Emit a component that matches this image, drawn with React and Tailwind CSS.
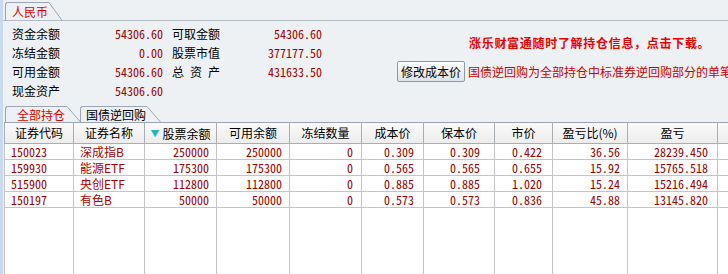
import React from 'react';

const CJK = "[font-family:'Noto_Sans_CJK_SC',sans-serif]";
const NUM = "[font-family:'Noto_Sans_Mono_CJK_SC','Liberation_Mono',monospace]";

// タブ（右側が斜めの形）
const Tab = ({ label, active, h = 19, pl = 'pl-[6px]', pr = 'pr-[1px]' }) => (
  <div className="flex items-end" style={{ height: h }}>
    <div
      className={`h-full flex items-center border-t border-l border-[#9aa6b2] rounded-tl-[3px] ${pl} ${pr} text-[12px] leading-none ${CJK} ${
        active ? 'text-[#e00000]' : 'text-black'
      }`}
    >
      {label}
    </div>
    <svg width="14" height={h} className="block">
      <path d={`M0 0.5 L13.5 ${h}`} stroke="#9aa6b2" fill="none" />
    </svg>
  </div>
);

const info = [
  ['资金余额', '54306.60', '可取金额', '54306.60'],
  ['冻结金额', '0.00', '股票市值', '377177.50'],
  ['可用金额', '54306.60', '总资产', '431633.50'],
  ['现金资产', '54306.60', '', ''],
];

const cols = [69, 71, 72, 73, 72, 62, 71, 58, 75, 90, 11];
const heads = ['证券代码', '证券名称', '股票余额', '可用余额', '冻结数量', '成本价', '保本价', '市价', '盈亏比(%)', '盈亏', ''];
const pads = ['', '', 'pr-[7px]', 'pr-[7px]', 'pr-[8px]', 'pr-[9px]', 'pr-[14px]', 'pr-[10px]', 'pr-[7px]', 'pr-[9px]', ''];

const rows = [
  ['150023', '深成指B', '250000', '250000', '0', '0.309', '0.309', '0.422', '36.56', '28239.450'],
  ['159930', '能源ETF', '175300', '175300', '0', '0.565', '0.565', '0.655', '15.92', '15765.518'],
  ['515900', '央创ETF', '112800', '112800', '0', '0.885', '0.885', '1.020', '15.24', '15216.494'],
  ['150197', '有色B', '50000', '50000', '0', '0.573', '0.573', '0.836', '45.88', '13145.820'],
];

export default function App() {
  return (
    <div className="w-[728px] h-[274px] overflow-hidden flex bg-[#edf1f4]">
      {/* 左の青いライン */}
      <div className="w-[3px] shrink-0 bg-[#c7daf1]" />

      <div className="flex-1 min-w-0 flex flex-col">
        {/* 通貨タブ */}
        <div className="h-[21px] pt-[2px] pl-[2px] border-b border-[#b3bcc5]">
          <Tab label="人民币" active />
        </div>

        {/* 資金情報 */}
        <div className="flex">
          <div className="grid grid-cols-[48px_103px_57px_102px] auto-rows-[19px] items-center mt-[3px] ml-[9px] text-[12px] leading-none">
            {info.map((r, i) => (
              <React.Fragment key={i}>
                <div className={`${CJK} text-black`}>{r[0]}</div>
                <div className={`${NUM} text-right text-[#a00000]`}>{r[1]}</div>
                <div className={`${CJK} text-black pl-[9px]`}>
                  {r[2] === '总资产' ? (
                    <span className="flex justify-between w-[48px]">
                      <span>总</span><span>资</span><span>产</span>
                    </span>
                  ) : (
                    r[2]
                  )}
                </div>
                <div className={`${NUM} text-right text-[#a00000]`}>{r[3]}</div>
              </React.Fragment>
            ))}
          </div>

          <div className="ml-[75px] flex flex-col min-w-0">
            <div className={`${CJK} mt-[15px] ml-[72px] text-[12px] leading-[14px] font-bold tracking-[0.7px] text-[#ee0000] whitespace-nowrap`}>
              涨乐财富通随时了解持仓信息，点击下载。
            </div>
            <div className="mt-[11px] flex items-center whitespace-nowrap overflow-hidden">
              <button className={`${CJK} h-[21px] w-[68px] shrink-0 text-[12px] leading-none text-black border border-[#8d99a6] rounded-[2px] bg-gradient-to-b from-[#fbfcfd] to-[#dde3ea]`}>
                修改成本价
              </button>
              <span className={`${CJK} ml-[3px] text-[12px] leading-none text-[#cc0000]`}>
                国债逆回购为全部持仓中标准券逆回购部分的单笔成本价
              </span>
            </div>
          </div>
        </div>

        {/* 持仓タブ */}
        <div className="mt-[6px] ml-[2px] h-[16px] flex items-end">
          <Tab label="全部持仓" active h={16} pl="pl-[11px]" pr="pr-[2px]" />
          <div className="-ml-[1px]">
            <Tab label="国债逆回购" h={16} pl="pl-[5px]" pr="pr-[1px]" />
          </div>
        </div>

        {/* 持仓テーブル */}
        <table className="ml-[1px] table-fixed border-collapse bg-white w-[724px] text-[12px] leading-none">
          <colgroup>
            {cols.map((w, i) => (
              <col key={i} style={{ width: w }} />
            ))}
          </colgroup>
          <thead>
            <tr className="h-[21px] bg-gradient-to-b from-[#fafafa] to-[#ececec]">
              {heads.map((h, i) => (
                <th key={i} className={`${CJK} font-normal text-black text-center border border-[#a9aeb3] border-t-[#98a4b0] p-0`}>
                  {i === 2 ? (
                    <span className="inline-flex items-center">
                      <span className="text-[#1fb8c4] text-[9px] mr-[3px]">▼</span>
                      {h}
                    </span>
                  ) : (
                    h
                  )}
                </th>
              ))}
            </tr>
          </thead>
          <tbody>
            {rows.map((r, i) => (
              <tr key={i} className="h-[16px]">
                {r.map((c, j) => (
                  <td
                    key={j}
                    className={`border border-[#c4c4c4] p-0 text-[#9c0000] ${
                      j === 0 ? `${NUM} pl-[6px]` : j === 1 ? `${CJK} pl-[6px] text-[#b00000]` : `${NUM} text-right ${pads[j]}`
                    }`}
                  >
                    {c}
                  </td>
                ))}
                <td className="border border-[#c4c4c4] p-0" />
              </tr>
            ))}
            <tr className="h-[68px]">
              {cols.map((_, j) => (
                <td key={j} className="border-x border-[#c4c4c4] p-0" />
              ))}
            </tr>
          </tbody>
        </table>
      </div>
    </div>
  );
}
